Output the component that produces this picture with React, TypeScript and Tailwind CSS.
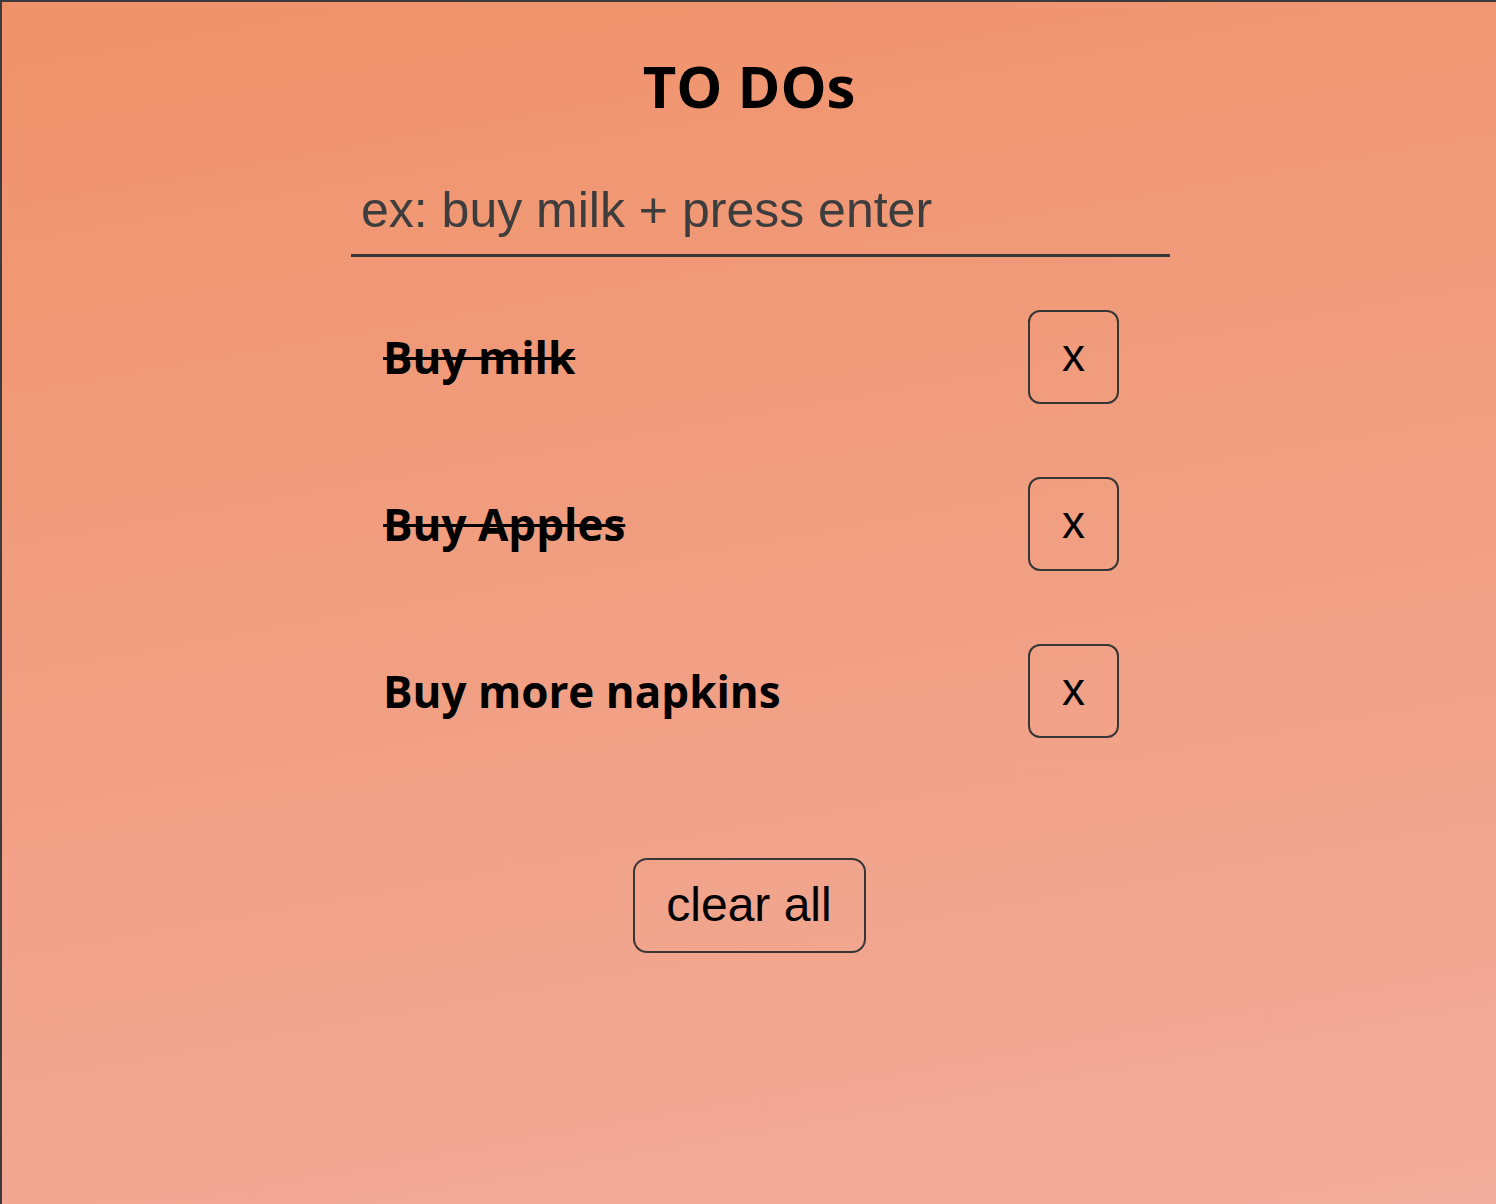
import { useState } from "react";

type Todo = { id: number; text: string; done: boolean };

const initialTodos: Todo[] = [
  { id: 1, text: "Buy milk", done: true },
  { id: 2, text: "Buy Apples", done: true },
  { id: 3, text: "Buy more napkins", done: false },
];

export default function App() {
  const [todos, setTodos] = useState<Todo[]>(initialTodos);
  const [value, setValue] = useState("");

  const addTodo = () => {
    if (!value.trim()) return;
    setTodos([...todos, { id: Date.now(), text: value.trim(), done: false }]);
    setValue("");
  };

  return (
    <div className="min-h-[1204px] w-full border-t-2 border-l-2 border-[#3b3b3d] bg-[linear-gradient(170deg,#f0926a_0%,#f2ac9b_100%)]">
      <h1 className="pt-[44px] text-center text-[58px] leading-[80px] font-bold text-black [font-family:'Open_Sans',sans-serif]">
        TO DOs
      </h1>

      <div className="ml-[349px] mt-[40px] w-[819px]">
        <input
          value={value}
          onChange={(e) => setValue(e.target.value)}
          onKeyDown={(e) => e.key === "Enter" && addTodo()}
          placeholder="ex: buy milk + press enter"
          className="block h-[91px] w-full border-b-[3px] border-[#363636] bg-transparent px-[10px] text-[50px] text-[#363636] outline-none placeholder:text-[#3d3d3d] [font-family:'Liberation_Sans',Arial,sans-serif]"
        />

        <ul className="mt-[53px] flex flex-col gap-[73px] pl-[32px] pr-[51px]">
          {todos.map((todo) => (
            <li key={todo.id} className="flex h-[94px] items-center justify-between">
              <span
                onClick={() =>
                  setTodos(todos.map((t) => (t.id === todo.id ? { ...t, done: !t.done } : t)))
                }
                className={`cursor-pointer text-[44px] font-bold text-black [font-family:'Open_Sans',sans-serif] ${
                  todo.done ? "line-through decoration-[3px]" : ""
                }`}
              >
                {todo.text}
              </span>
              <button
                onClick={() => setTodos(todos.filter((t) => t.id !== todo.id))}
                className="flex h-[94px] w-[91px] items-center justify-center rounded-[12px] border-2 border-[#363636] pb-[4px] text-[46px] text-black [font-family:'Liberation_Sans',Arial,sans-serif]"
              >
                x
              </button>
            </li>
          ))}
        </ul>
      </div>

      <div className="mt-[120px] flex justify-center">
        <button
          onClick={() => setTodos([])}
          className="h-[95px] w-[233px] rounded-[14px] border-2 border-[#363636] pb-[2px] text-[48px] text-black [font-family:'Liberation_Sans',Arial,sans-serif]"
        >
          clear all
        </button>
      </div>
    </div>
  );
}
